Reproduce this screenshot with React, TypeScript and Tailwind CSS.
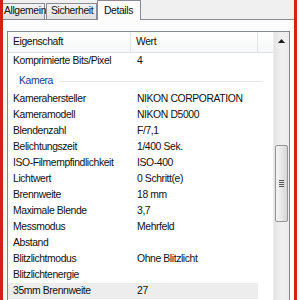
import React from "react";

type Row = { label: string; value: string; hover?: boolean };

const kamera: Row[] = [
  { label: "Kamerahersteller", value: "NIKON CORPORATION" },
  { label: "Kameramodell", value: "NIKON D5000" },
  { label: "Blendenzahl", value: "F/7,1" },
  { label: "Belichtungszeit", value: "1/400 Sek." },
  { label: "ISO-Filmempfindlichkeit", value: "ISO-400" },
  { label: "Lichtwert", value: "0 Schritt(e)" },
  { label: "Brennweite", value: "18 mm" },
  { label: "Maximale Blende", value: "3,7" },
  { label: "Messmodus", value: "Mehrfeld" },
  { label: "Abstand", value: "" },
  { label: "Blitzlichtmodus", value: "Ohne Blitzlicht" },
  { label: "Blitzlichtenergie", value: "" },
  { label: "35mm Brennweite", value: "27", hover: true },
];

const PropRow = ({ row }: { row: Row }) => (
  <div className={`flex h-[16px] w-[250px] items-center shrink-0 ${row.hover ? "bg-[#ededed]" : ""}`}>
    <div className="w-[123px] pl-[5px] whitespace-nowrap">{row.label}</div>
    <div className="flex-1 pl-[6px] whitespace-nowrap">{row.value}</div>
  </div>
);

export default function App() {
  return (
    <div className="w-[300px] h-[300px] overflow-hidden flex bg-white text-[10.4px] tracking-[-0.4px] leading-none text-[#111] font-['Liberation_Sans',Arial,sans-serif]">
      <div className="w-[3px] shrink-0 bg-[#d91c1c]" />

      <div className="w-[291px] shrink-0 flex flex-col overflow-hidden bg-[#f0f0f0]">
        {/* tab strip */}
        <div className="h-[19px] shrink-0 flex items-end">
          <div className="w-[42px] h-[16px] shrink-0 flex items-center pl-[1px] border-t border-r border-[#898c95] bg-gradient-to-b from-[#f3f3f3] to-[#e1e1e1] whitespace-nowrap">
            Allgemein
          </div>
          <div className="ml-[1px] w-[51px] h-[16px] shrink-0 flex items-center pl-[4px] border-t border-x border-[#898c95] bg-gradient-to-b from-[#f3f3f3] to-[#e1e1e1] whitespace-nowrap">
            Sicherheit
          </div>
          <div className="relative z-10 -mb-[1px] w-[44px] h-[20px] shrink-0 flex items-start pt-[5px] pl-[6px] border-t border-x border-[#898c95] bg-[#fcfcfc] whitespace-nowrap">
            Details
          </div>
        </div>

        {/* tab panel */}
        <div className="flex-1 border-t border-[#898c95] bg-[#fcfcfc] pt-[11px] pl-[4px] pr-[4px] min-h-0">
          <div className="h-[300px] flex border border-[#828790] bg-white">
            <div className="w-[265px] shrink-0 flex flex-col">
              {/* header */}
              <div className="h-[21px] shrink-0 flex border-b border-[#e0e2e5] bg-gradient-to-b from-white to-[#f6f7f8]">
                <div className="w-[123px] flex items-center pl-[5px] border-r border-[#e3e4e6]">Eigenschaft</div>
                <div className="w-[127px] flex items-center pl-[5px] border-r border-[#e3e4e6]">Wert</div>
                <div className="flex-1" />
              </div>

              <PropRow row={{ label: "Komprimierte Bits/Pixel", value: "4" }} />

              <div className="h-[22px] shrink-0 flex items-center pt-[2px] pl-[11px] pr-[10px]">
                <span className="text-[#1e3a8c]">Kamera</span>
                <div className="flex-1 ml-[6px] h-px bg-[#e3e6ee]" />
              </div>

              {kamera.map((r) => (
                <PropRow key={r.label} row={r} />
              ))}
            </div>

            {/* scrollbar */}
            <div className="w-[16px] shrink-0 flex flex-col bg-gradient-to-r from-[#e4e4e4] via-[#f0f0f0] to-[#ececec] border-l border-[#ececec]">
              <div className="h-[17px] shrink-0 flex items-center justify-center">
                <svg width="7" height="4" viewBox="0 0 7 4">
                  <path d="M3.5 0 L7 4 L0 4 Z" fill="#1a1a1a" />
                </svg>
              </div>
              <div className="h-[96px] shrink-0" />
              <div className="h-[77px] shrink-0 mx-[1px] rounded-[2px] border border-[#959595] bg-gradient-to-r from-[#f4f4f4] via-[#e8e8e8] to-[#d6d6d6] flex flex-col items-center justify-center gap-[1px]">
                <div className="w-[5px] h-px bg-[#555]" />
                <div className="w-[5px] h-px bg-[#555]" />
                <div className="w-[5px] h-px bg-[#555]" />
                <div className="w-[5px] h-px bg-[#555]" />
              </div>
            </div>
          </div>
        </div>
      </div>

      <div className="w-[3px] shrink-0 bg-[#d91c1c]" />
      <div className="flex-1 bg-white" />
    </div>
  );
}
